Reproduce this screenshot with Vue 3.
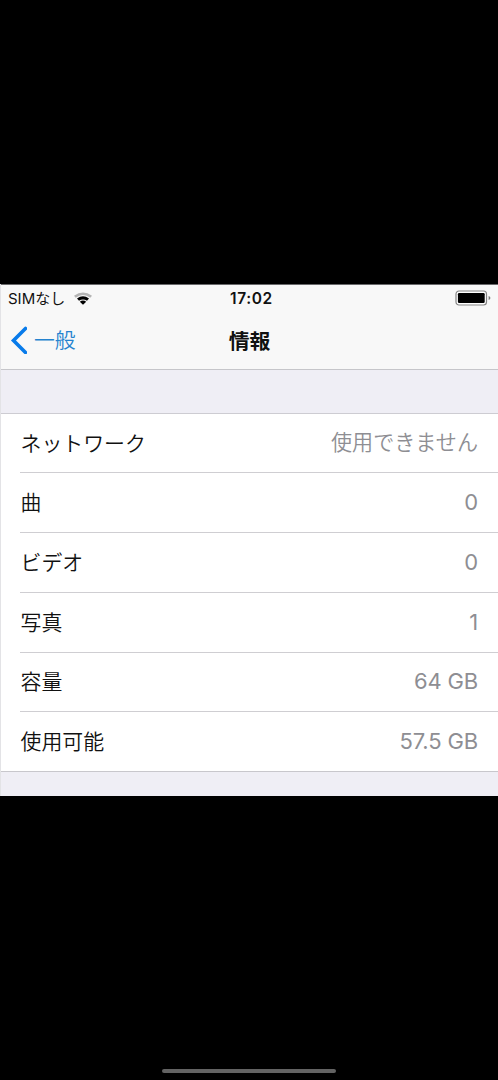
<script setup>
const rows = [
  { label: 'ネットワーク', value: '使用できません', japanese: true },
  { label: '曲', value: '0' },
  { label: 'ビデオ', value: '0' },
  { label: '写真', value: '1' },
  { label: '容量', value: '64 GB' },
  { label: '使用可能', value: '57.5 GB' },
]
</script>

<template>
  <div class="screen">
    <main class="phone">
      <header class="header">
        <div class="status">
          <div class="carrier">
            <span>SIMなし</span>
            <svg class="wifi" width="20" height="15" viewBox="0 0 20 15">
              <path d="M1 4.8Q10-2 19 4.8L17.3 6.7Q10 1.2 2.7 6.7Z" fill="#b4b4b4" />
              <path d="M4 7.5Q10 2.8 16 7.5L14 9.8Q10 7.2 6 9.8Z" fill="#000" />
              <path d="M6.8 10.7Q10 8.2 13.2 10.7L10 13.8Z" fill="#000" />
            </svg>
          </div>
          <span class="clock">17:02</span>
          <svg class="battery" width="36" height="16" viewBox="0 0 36 16">
            <rect x="1" y="1" width="30.5" height="14" rx="3" fill="#fff" stroke="#858585" stroke-width="1.2" />
            <rect x="2.9" y="3" width="26.8" height="10" rx="1.2" fill="#000" />
            <path d="M33.6 6Q35.4 6.5 35.4 8T33.6 10Z" fill="#777" />
          </svg>
        </div>
        <nav class="nav">
          <div class="back">
            <svg width="18" height="28" viewBox="0 0 18 28">
              <path d="M16.5 2.5L4.5 14.5L16.5 26.5" fill="none" stroke="#087bea" stroke-width="3.6" stroke-linecap="round" stroke-linejoin="miter" />
            </svg>
            <span>一般</span>
          </div>
          <h1 class="title">情報</h1>
        </nav>
      </header>
      <section class="list">
        <div v-for="row in rows" :key="row.label" class="row">
          <span class="label">{{ row.label }}</span>
          <span class="value" :class="{ japanese: row.japanese }">{{ row.value }}</span>
        </div>
      </section>
    </main>
    <div class="home"></div>
  </div>
</template>

<style>
body {
  background: #000;
}
</style>

<style scoped>
.screen {
  box-sizing: border-box;
  width: 498px;
  height: 1080px;
  padding: 284px 0 7px;
  background: #000;
  display: flex;
  flex-direction: column;
  justify-content: space-between;
  align-items: center;
  overflow: hidden;
  font-family: Inter, "Noto Sans CJK JP", sans-serif;
}
.phone {
  box-sizing: border-box;
  width: 498px;
  height: 512px;
  background: #efeef5;
  border-left: 1px solid #e3e3e6;
}
.header {
  box-sizing: border-box;
  height: 86px;
  background: #f8f8f8;
  border-top: 1px solid #69696b;
  border-bottom: 1px solid #c6c6ca;
}
.status {
  height: 26px;
  display: grid;
  grid-template-columns: 1fr auto 1fr;
  align-items: center;
  padding: 0 7px;
  color: #111;
}
.carrier {
  display: flex;
  align-items: center;
  gap: 8px;
  font-size: 15px;
  line-height: 20px;
}
.carrier span {
  padding-top: 2px;
}
.clock {
  padding: 2px 0 0 4px;
  font-size: 15.5px;
  font-weight: 600;
  line-height: 20px;
  letter-spacing: 0.6px;
}
.battery {
  justify-self: end;
}
.nav {
  height: 58px;
  display: grid;
  grid-template-columns: 1fr auto 1fr;
  align-items: center;
  padding: 0 9px 0 8px;
}
.back {
  display: flex;
  align-items: center;
  gap: 7px;
  color: #2583cf;
  font-size: 20.8px;
  font-weight: 350;
  line-height: 30px;
}
.back span {
  padding-top: 2px;
}
.title {
  margin: 0;
  padding: 3px 0 0 1px;
  color: #111;
  font-size: 20.8px;
  font-weight: 700;
  line-height: 30px;
}
.list {
  box-sizing: border-box;
  margin-top: 43px;
  height: 359px;
  background: #fff;
  border-top: 1px solid #cdccd2;
  border-bottom: 1px solid #c8c7cc;
  display: grid;
  grid-template-rows: 59px 60px 60px 59.5px 59.5px 59px;
}
.row {
  box-sizing: border-box;
  margin-left: 19px;
  padding-right: 20px;
  border-bottom: 1px solid #cfced2;
  display: flex;
  justify-content: space-between;
  align-items: center;
  line-height: 30px;
}
.row:last-child {
  border-bottom: 0;
}
.label {
  padding: 1px 0 0 0.5px;
  color: #111;
  font-size: 20.9px;
  font-weight: 350;
}
.value {
  padding-bottom: 1px;
  color: #8e8e93;
  font-size: 22px;
  font-weight: 400;
  letter-spacing: -0.15px;
}
.japanese {
  padding-bottom: 0;
  font-size: 21.1px;
  font-weight: 350;
  letter-spacing: 0;
}
.home {
  width: 174px;
  height: 4px;
  border-radius: 2px;
  background: #636363;
}
</style>
